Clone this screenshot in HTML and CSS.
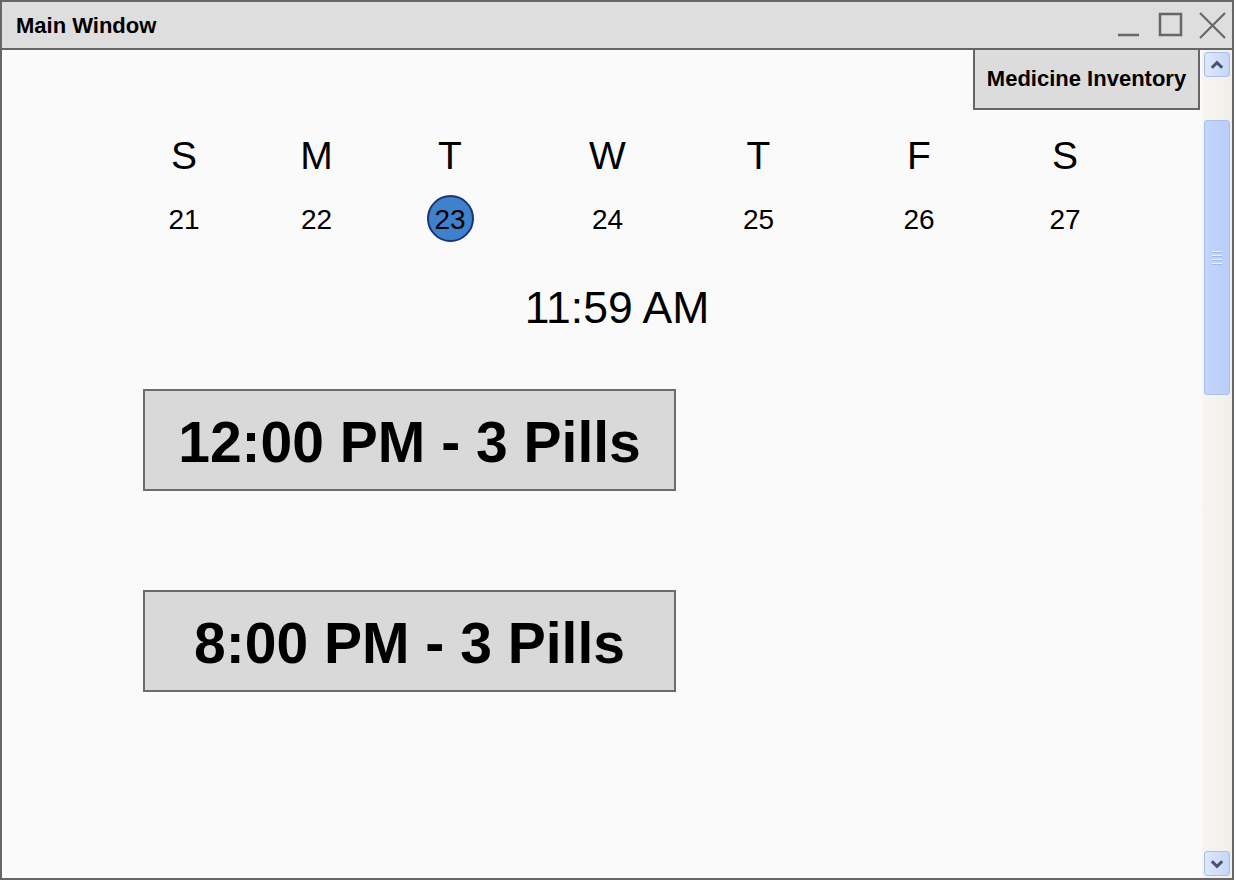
FILE: index.html
```html
<!DOCTYPE html>
<html>
<head>
<meta charset="utf-8">
<title>Main Window</title>
<link rel="stylesheet" href="styles.css">
</head>
<body>
<div class="window">
  <div class="titlebar">
    <span class="title">Main Window</span>
    <svg class="controls" width="120" height="46" viewBox="0 0 120 46">
      <line x1="6" y1="33" x2="27" y2="33" stroke="#666" stroke-width="2.5"/>
      <rect x="48" y="12" width="21" height="21" fill="none" stroke="#666" stroke-width="2.5"/>
      <line x1="88" y1="11" x2="113" y2="36" stroke="#666" stroke-width="2.2"/>
      <line x1="113" y1="11" x2="88" y2="36" stroke="#666" stroke-width="2.2"/>
    </svg>
  </div>
  <div class="body">
    <div class="main">
      <div class="topbar">
        <div class="inv-btn">Medicine Inventory</div>
      </div>
      <div class="calendar">
        <div class="day">S</div>
        <div class="day">M</div>
        <div class="day">T</div>
        <div class="day">W</div>
        <div class="day">T</div>
        <div class="day">F</div>
        <div class="day">S</div>
        <div class="date"><span>21</span></div>
        <div class="date"><span>22</span></div>
        <div class="date"><span class="today">23</span></div>
        <div class="date"><span>24</span></div>
        <div class="date"><span>25</span></div>
        <div class="date"><span>26</span></div>
        <div class="date"><span>27</span></div>
      </div>
      <div class="clock">11:59 AM</div>
      <div class="doses">
        <div class="dose">12:00 PM - 3 Pills</div>
        <div class="dose">8:00 PM - 3 Pills</div>
      </div>
    </div>
    <div class="scrollbar">
      <div class="sbtn">
        <svg width="14" height="10" viewBox="0 0 14 10"><polyline points="1.8,7.8 7,2.6 12.2,7.8" fill="none" stroke="#47536f" stroke-width="3"/></svg>
      </div>
      <div class="track">
        <div class="thumb">
          <div class="grip"><i></i><i></i><i></i><i></i></div>
        </div>
      </div>
      <div class="sbtn">
        <svg width="14" height="10" viewBox="0 0 14 10"><polyline points="1.8,2.2 7,7.4 12.2,2.2" fill="none" stroke="#47536f" stroke-width="3"/></svg>
      </div>
    </div>
  </div>
</div>
</body>
</html>
```

FILE: styles.css
```css
html, body {
  margin: 0;
  padding: 0;
  background: #ffffff;
}

body {
  font-family: "Liberation Sans", Arial, sans-serif;
  color: #000;
}

.window {
  width: 1234px;
  height: 880px;
  box-sizing: border-box;
  border: 2px solid #666666;
  display: flex;
  flex-direction: column;
  background: #fafafa;
}

.titlebar {
  height: 46px;
  border-bottom: 2px solid #666666;
  background: #dedede;
  display: flex;
  align-items: center;
  justify-content: space-between;
  flex: none;
}

.title {
  font-weight: bold;
  font-size: 22px;
  line-height: 46px;
  padding-left: 14px;
  padding-top: 1px;
}

.controls {
  display: block;
}

.body {
  flex: 1;
  display: flex;
  min-height: 0;
}

.main {
  flex: 1;
  display: flex;
  flex-direction: column;
  background: #fafafa;
}

.topbar {
  display: flex;
  justify-content: flex-end;
}

.inv-btn {
  margin-top: -2px;
  margin-right: 2px;
  width: 227px;
  height: 62px;
  box-sizing: border-box;
  border: 2px solid #666666;
  background: #dcdcdc;
  font-weight: bold;
  font-size: 22px;
  display: flex;
  align-items: center;
  justify-content: center;
  position: relative;
}

.calendar {
  margin-top: 23px;
  margin-left: 116px;
  display: grid;
  grid-template-columns: 132px 133px 134px 181px 121px 200px 92px;
  row-gap: 17px;
}

.day {
  text-align: center;
  font-size: 39px;
  line-height: 45px;
}

.date {
  height: 47px;
  display: flex;
  align-items: center;
  justify-content: center;
  font-size: 28px;
}

.date span {
  line-height: 32px;
  padding-top: 3px;
}

.date .today {
  width: 47px;
  height: 47px;
  box-sizing: border-box;
  border: 2px solid #1b3477;
  border-radius: 50%;
  background: #3f81cb;
  display: flex;
  align-items: center;
  justify-content: center;
  padding-top: 2px;
}

.clock {
  margin-top: 41px;
  padding-left: 30px;
  text-align: center;
  font-size: 44.5px;
  line-height: 50px;
}

.doses {
  margin-top: 56px;
  margin-left: 141px;
  display: flex;
  flex-direction: column;
  gap: 99px;
}

.dose {
  width: 533px;
  height: 102px;
  box-sizing: border-box;
  border: 2px solid #6b6b6b;
  background: #d9d9d9;
  font-weight: bold;
  font-size: 57px;
  display: flex;
  align-items: center;
  justify-content: center;
  padding-top: 4px;
}

.scrollbar {
  width: 30px;
  flex: none;
  display: flex;
  flex-direction: column;
  background: linear-gradient(to right, #f6f5f1, #f1efe9);
}

.sbtn {
  margin: 2px;
  height: 25px;
  box-sizing: border-box;
  border: 1px solid #aabfe8;
  border-radius: 3px;
  background: linear-gradient(to right, #dfe8fb, #c6d6f7);
  display: flex;
  align-items: center;
  justify-content: center;
  flex: none;
}

.track {
  flex: 1;
  padding-top: 41px;
}

.thumb {
  margin: 0 2px;
  height: 275px;
  box-sizing: border-box;
  border: 1px solid #a9bfec;
  border-radius: 3px;
  background: linear-gradient(to right, #c4d5fb, #b9cdf7);
  display: flex;
  align-items: center;
  justify-content: center;
}

.grip {
  display: flex;
  flex-direction: column;
  gap: 2px;
}

.grip i {
  display: block;
  width: 10px;
  height: 1px;
  background: #eef3fe;
  border-bottom: 1px solid #9fb7ea;
}
```
